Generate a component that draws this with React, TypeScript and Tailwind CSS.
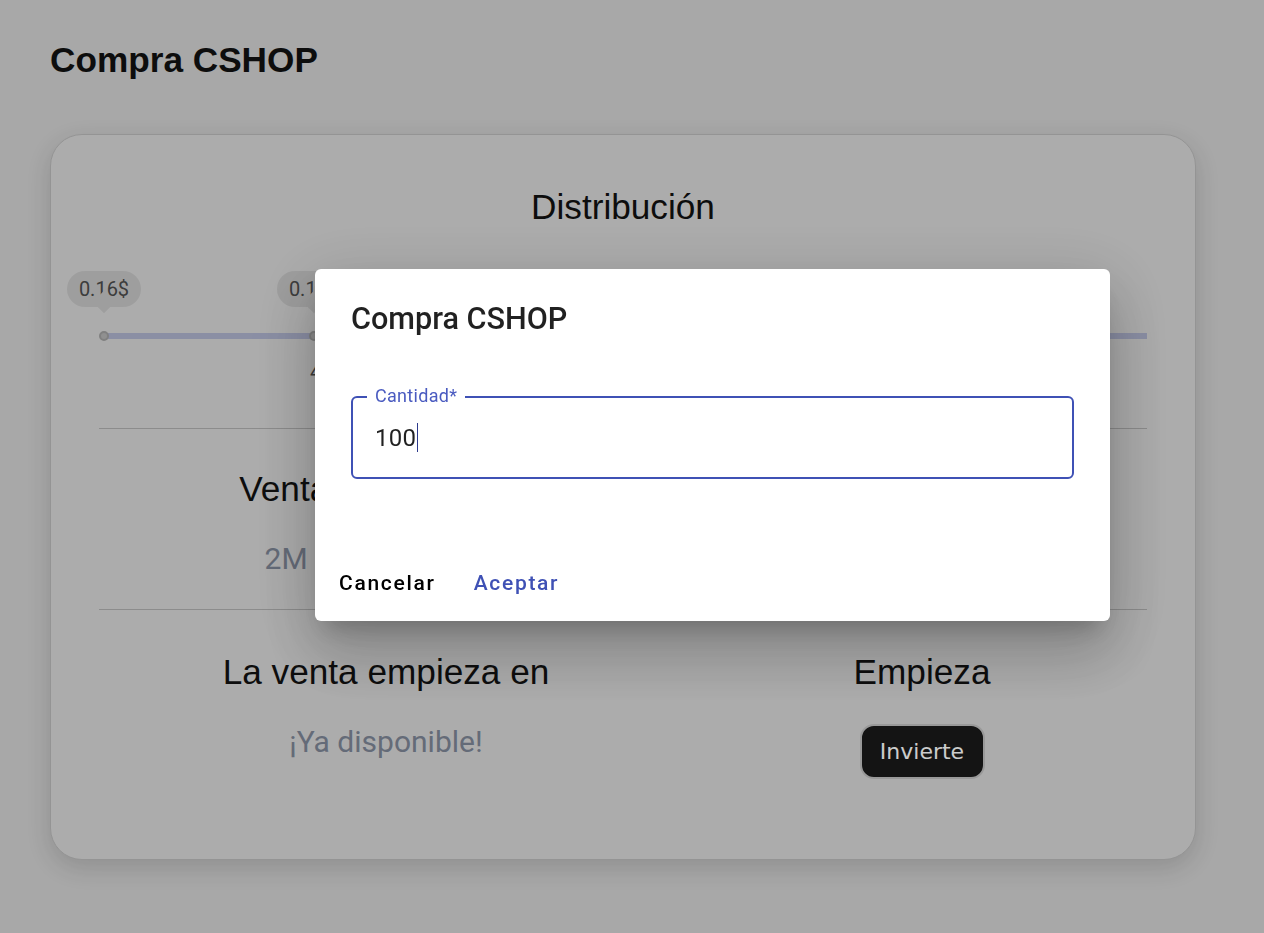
import React from 'react';

const arial = "font-['Liberation_Sans',Arial,sans-serif]";
const roboto = "font-['Roboto','Noto_Sans',sans-serif]";

// Una burbuja de precio encima de un punto de la barra
const PriceBubble = ({ left, label }: { left: number; label: string }) => (
    <div className="absolute top-0 flex flex-col items-center" style={{ left: left - 37 }}>
        <div className={`relative flex h-[36px] w-[74px] items-center justify-center rounded-[18px] bg-[#c6c6c6] text-[20px] text-[#4c4c4c] ${roboto}`}>
            {label}
        </div>
        <div className="-mt-[13px] h-[16px] w-[16px] rotate-45 bg-[#c6c6c6]" />
    </div>
);

const Dot = ({ left }: { left: number }) => (
    <div
        className="absolute top-[60px] h-[10px] w-[10px] rounded-full border-[2.5px] border-[#a0a0a0] bg-[#b4b4b4]"
        style={{ left: left - 5 }}
    />
);

const InfoCell = ({ title, children }: { title: string; children: React.ReactNode }) => (
    <div className="flex flex-col items-center">
        <h3 className={`text-[35.2px] leading-[normal] text-[#111] ${arial}`}>{title}</h3>
        <div className="mt-[32px]">{children}</div>
    </div>
);

const Value = ({ text }: { text: string }) => (
    <p className={`text-[30px] leading-[normal] text-[#7e8696] ${roboto}`}>{text}</p>
);

export default function App() {
    return (
        <div className={`relative min-h-screen bg-[#d2d2d2] ${arial}`}>
            <div className="pt-[40px] pr-[68px] pb-[74px] pl-[50px]">
                <h1 className="text-[35.2px] font-bold leading-[normal] text-[#111]">Compra CSHOP</h1>

                <div className="mt-[54px] rounded-[32px] border border-[#bababa] bg-[#d8d8d8] px-[48px] pt-[52px] pb-[80px] shadow-[0_8px_24px_rgba(0,0,0,0.14)]">
                    <h2 className="text-center text-[35.2px] leading-[normal] text-[#111]">Distribución</h2>

                    {/* barra de distribución */}
                    <div className="relative mt-[44px] h-[110px]">
                        <div className="absolute top-[62px] right-0 left-[5px] h-[6px] bg-[#aeb3ce]" />
                        <PriceBubble left={5} label="0.16$" />
                        <PriceBubble left={215} label="0.18$" />
                        <PriceBubble left={620} label="0.20$" />
                        <Dot left={5} />
                        <Dot left={215} />
                        <Dot left={620} />
                        <span className={`absolute top-[86px] left-[211px] text-[20px] text-[#4c4c4c] ${roboto}`}>40%</span>
                        <span className={`absolute top-[86px] left-[616px] text-[20px] text-[#4c4c4c] ${roboto}`}>60%</span>
                    </div>

                    <div className="mt-[47px] border-t border-[#afafaf]" />

                    <div className="grid grid-cols-[574px_1fr] gap-6 pt-[40px] pb-[33px]">
                        <InfoCell title="Ventas disponibles">
                            <Value text={'2M\u2002/\u200210M tokens'} />
                        </InfoCell>
                        <InfoCell title="Precio">
                            <Value text="0.16$" />
                        </InfoCell>
                    </div>

                    <div className="border-t border-[#afafaf]" />

                    <div className="grid grid-cols-[574px_1fr] gap-6 pt-[42px]">
                        <InfoCell title="La venta empieza en">
                            <Value text="¡Ya disponible!" />
                        </InfoCell>
                        <InfoCell title="Empieza">
                            <button className="flex h-[55px] w-[125px] items-center justify-center rounded-[14px] border-2 border-[#c0c0c0] bg-[#191919] font-['DejaVu_Sans',sans-serif] text-[22px] text-white">
                                Invierte
                            </button>
                        </InfoCell>
                    </div>
                </div>
            </div>

            {/* fondo oscuro del diálogo */}
            <div className="fixed inset-0 z-50 bg-black/20 pt-[269px] pl-[315px]">
                <div className={`w-[795px] rounded-[6px] bg-white shadow-[0_16px_22px_-10px_rgba(0,0,0,0.2),0_36px_57px_4px_rgba(0,0,0,0.14),0_14px_69px_12px_rgba(0,0,0,0.12)] ${roboto}`}>
                    <h2 className="px-[36px] pt-[26px] text-[30.6px] font-medium leading-[48px] text-[rgba(0,0,0,0.87)]">
                        Compra CSHOP
                    </h2>

                    <div className="px-[36px] pt-[53px]">
                        <div className="relative flex h-[83px] items-center rounded-[6px] border-2 border-[#3f51b5] pl-[22px]">
                            <span className="absolute -top-[13px] left-[14px] bg-white px-[8px] text-[18px] leading-[22px] tracking-[0.3px] text-[#4a5bc0]">
                                Cantidad*
                            </span>
                            <span className="text-[24px] leading-[28px] tracking-[0.2px] text-[rgba(0,0,0,0.87)]">100</span>
                            <span className="ml-px h-[29px] w-px bg-[#2d3a8c]" />
                        </div>
                    </div>

                    <div className="mt-[92px] flex gap-[38px] pb-[25px] pl-[24px]">
                        <button className="text-[21px] font-medium leading-[25px] tracking-[1.7px] text-black">Cancelar</button>
                        <button className="text-[21px] font-medium leading-[25px] tracking-[1.7px] text-[#3f51b5]">Aceptar</button>
                    </div>
                </div>
            </div>
        </div>
    );
}
